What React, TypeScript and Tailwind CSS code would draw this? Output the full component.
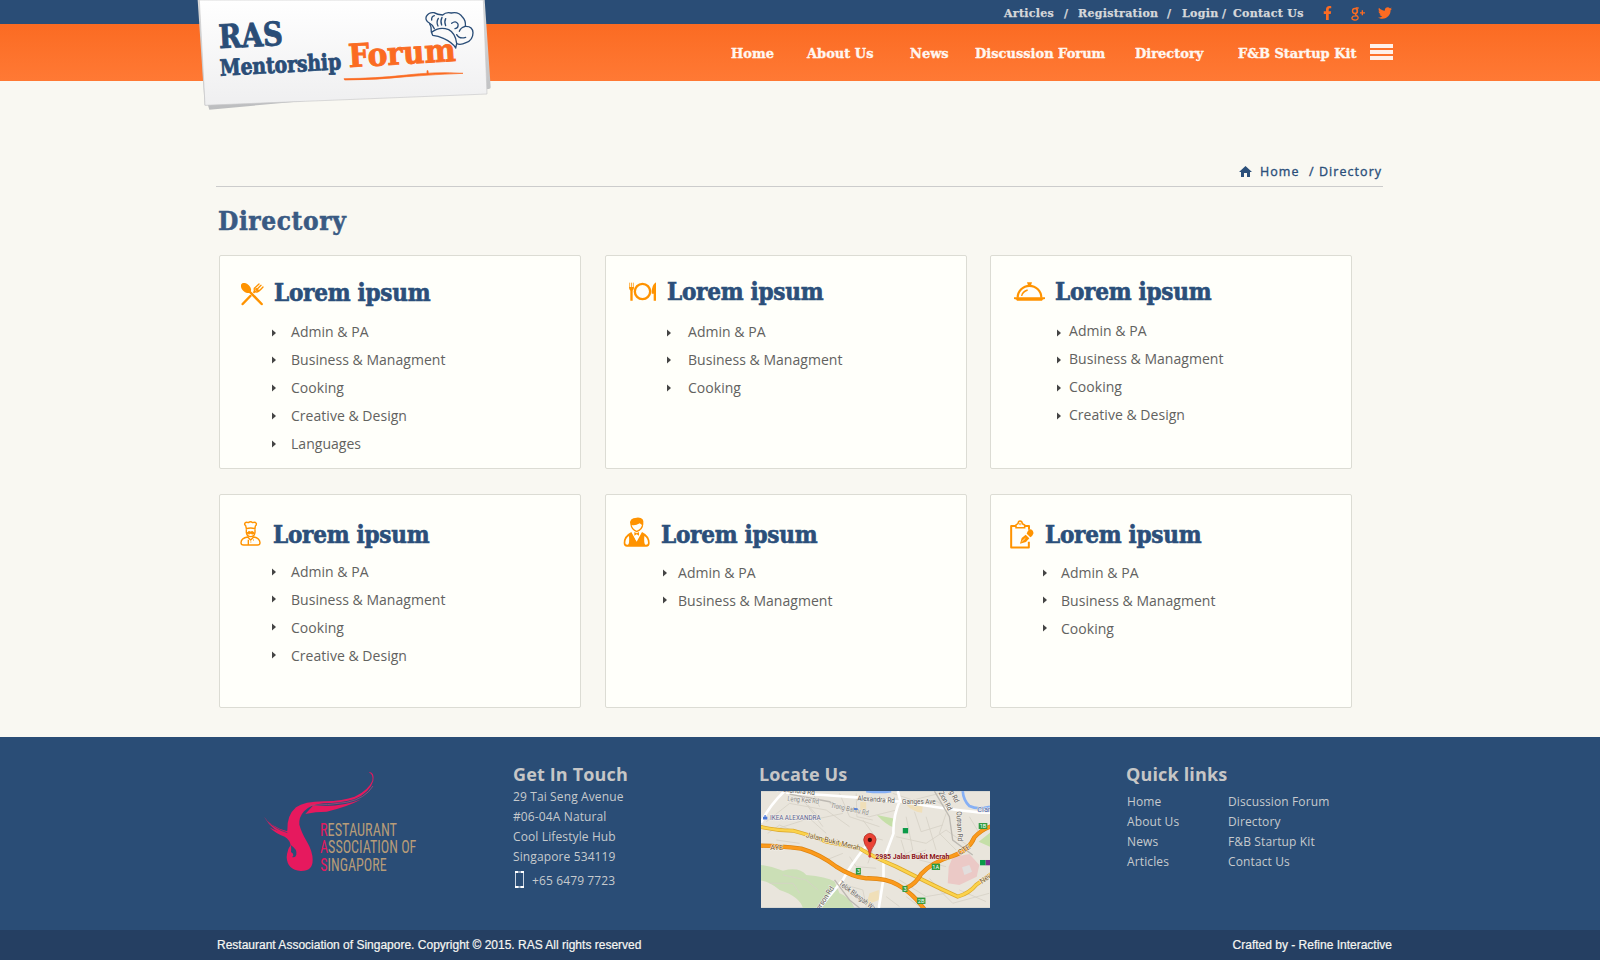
import type { ReactNode } from "react";
import { FaFacebookF, FaTwitter } from "react-icons/fa";

const SLAB = "font-['DejaVu_Serif_Condensed','DejaVu_Serif',serif] font-bold";
const SLAB_WIDE = "font-['DejaVu_Serif',serif] font-bold";

function BrandLogo() {
  return (
    <svg width="310" height="120" viewBox="0 0 930 360" className="absolute left-[190px] top-0" role="img" aria-label="RAS Mentorship Forum">
      <defs>
        <linearGradient id="paper" x1="0" y1="0" x2="0" y2="1">
          <stop offset="0" stopColor="#ffffff" />
          <stop offset="1" stopColor="#efeff0" />
        </linearGradient>
        <linearGradient id="back" x1="0" y1="0" x2="0" y2="1">
          <stop offset="0" stopColor="#dcdcdc" />
          <stop offset="1" stopColor="#bcbdbf" />
        </linearGradient>
      </defs>
      <path d="M23 0 L884 0 L902 262 Q902 267 896 267 L420 296 L58 329 L54 316 L44 316 Z" fill="url(#back)" />
      <path d="M28 0 L880 0 L891 282 L45 316 Z" fill="url(#paper)" stroke="#c8c8ca" strokeWidth="2" />
      <g className="font-['DejaVu_Serif_Condensed','DejaVu_Serif',serif] font-bold" fill="#2a4d77" stroke="#2a4d77" strokeWidth="2.5">
        <text x="0" y="0" fontSize="98" textLength="192" lengthAdjust="spacingAndGlyphs" transform="translate(88 145) rotate(-3)">RAS</text>
        <text x="0" y="0" fontSize="67" textLength="364" lengthAdjust="spacingAndGlyphs" transform="translate(91 227) rotate(-3)">Mentorship</text>
        <text x="0" y="0" fontSize="96" textLength="322" lengthAdjust="spacingAndGlyphs" fill="#fb6b22" stroke="#fb6b22" transform="translate(477 202) rotate(-3.4)">Forum</text>
      </g>
      <path d="M462 236 Q560 235 640 226 Q740 214 819 220 Q740 223 650 230 Q560 240 464 240 Z M711 212 L714 212 L715 222 H711 Z" fill="#fb6b22" stroke="#fb6b22" strokeWidth="2" />
      <g fill="none" stroke="#2a4d77" strokeWidth="4" strokeLinecap="round" strokeLinejoin="round">
        <path d="M724 96 Q726 82 718 69 Q704 62 709 49 Q717 36 732 38 Q742 44 758 45 Q768 35 784 39 Q806 34 818 52 Q828 62 826 79 Q848 78 849 98 Q849 120 828 128 Q812 136 800 131 L797 144 Q788 128 762 116 Q744 107 728 106 Z" fill="#fafafa" />
        <path d="M725 97 Q748 78 776 89 Q796 99 800 130 M745 55 Q738 66 744 78 M756 52 Q750 64 755 75 M767 56 Q762 66 767 77 M785 70 Q797 60 804 72 Q806 84 795 86 M826 79 Q812 82 808 94 M800 104 Q808 118 827 112 M719 70 Q728 74 733 86 M733 47 Q724 50 725 60" />
      </g>
    </svg>
  );
}

function GooglePlus() {
  return (
    <svg width="14" height="14" viewBox="0 0 42 42" fill="none" stroke="#fb6b22" strokeWidth="4">
      <circle cx="12" cy="12" r="7.5" />
      <path d="M14 3 H23 M17 7 Q22 14 15 20 Q12 23 17 26 Q24 31 20 36 Q16 40 10 39 Q2 38 3 32 Q5 26 16 27 M34 10 V25 M27 17.5 H42" />
    </svg>
  );
}

const top = [
  { label: "Articles", w: "w-[60px]" },
  { label: "/", w: "w-[14px]" },
  { label: "Registration", w: "w-[89px]" },
  { label: "/", w: "w-[15px]" },
  { label: "Login", w: "w-[40px]" },
  { label: "/", w: "w-[11px]" },
  { label: "Contact Us", w: "w-[90px]" },
];

const nav = [
  { label: "Home", w: "w-[76px]" },
  { label: "About Us", w: "w-[103px]" },
  { label: "News", w: "w-[65px]" },
  { label: "Discussion Forum", w: "w-[160px]" },
  { label: "Directory", w: "w-[103px]" },
  { label: "F&B Startup Kit", w: "w-[132px]" },
];

function Header() {
  return (
    <header className="relative">
      <div className="flex h-6 bg-[#2a4d76] pl-[1004px] pt-[6px]">
        {top.map((t, i) => (
          <span key={i} className={`${SLAB_WIDE} ${t.w} shrink-0 whitespace-nowrap text-[11px] leading-[15px] tracking-[0.3px] text-[#d6d8da] [-webkit-text-stroke:0.25px_#d6d8da]`}>
            {t.label}
          </span>
        ))}
        <FaFacebookF className="h-[14px] w-[9px] text-[#fb6b22]" />
        <span className="ml-[19px] mt-px"><GooglePlus /></span>
        <FaTwitter className="ml-3 h-[14px] w-4 text-[#fb6b22]" />
      </div>
      <div className="flex h-[57px] bg-linear-to-b from-[#fb6b22] to-[#ff7934] pl-[731px] pt-5">
        {nav.map((t) => (
          <a key={t.label} className={`${SLAB_WIDE} ${t.w} shrink-0 whitespace-nowrap text-[13px] leading-[19px] text-[#fff6f0] [-webkit-text-stroke:0.35px_#fff6f0]`}>
            {t.label}
          </a>
        ))}
        <div className="flex w-[23px] flex-col gap-[2px]">
          <i className="h-1 bg-[#fff1ea]" />
          <i className="h-1 bg-[#fff1ea]" />
          <i className="h-1 bg-[#fff1ea]" />
        </div>
      </div>
      <BrandLogo />
    </header>
  );
}

const O = "#ff9300";

const CutleryIcon = (
  <svg width="23" height="23" viewBox="122 398 69 69">
    <ellipse cx="137" cy="413" rx="18" ry="12" transform="rotate(45 137 413)" fill={O} />
    <path d="M143 419 L184 461" stroke={O} strokeWidth="7.5" strokeLinecap="round" />
    <path d="M150 437 L127 461" stroke={O} strokeWidth="7.5" strokeLinecap="round" />
    <path d="M159 427 L166 421" stroke={O} strokeWidth="6" />
    <path d="M162 414 Q160 424 168 425 Q174 426 188 410 M162 414 L176 401 M168 419 L182 405" stroke={O} strokeWidth="4" fill="none" strokeLinecap="round" />
    <path d="M163 416 L172 425 L177 420 L168 412 Z" fill={O} />
  </svg>
);

const PlateIcon = (
  <svg width="27" height="19" viewBox="117 125 81 57">
    <path d="M119 127 V143 M124.5 127 V143 M130 127 V143" stroke={O} strokeWidth="3" opacity=".75" />
    <path d="M117 140 H132 Q132 149 128 151 V181 H121 V151 Q117 149 117 140 Z" fill={O} />
    <circle cx="157.5" cy="153.5" r="23" fill="none" stroke={O} strokeWidth="7" />
    <path d="M198 126 V181 H191 V160 H185 Q184 134 198 126 Z" fill={O} />
  </svg>
);

const ClocheIcon = (
  <svg width="31" height="19" viewBox="102 395 93 57">
    <path d="M113 442 A35.5 35.5 0 0 1 184 442" fill="none" stroke={O} strokeWidth="6.5" />
    <path d="M102 441 H195 V446 Q187 446 186 451 H111 Q110 446 102 446 Z" fill={O} />
    <path d="M141 396 H156 L153 405 H144 Z" fill={O} />
    <path d="M125 437 Q127 424 143 419" fill="none" stroke={O} strokeWidth="4" />
  </svg>
);

const ChefIcon = (
  <svg width="21" height="25" viewBox="121 121 63 75" fill="none" stroke={O} strokeWidth="4.2" strokeLinejoin="round">
    <path d="M140 144 L138 135 Q133 132 136 127 Q140 123 146 126 Q153 121 159 126 Q166 123 170 128 Q171 133 167 136 L166 144 Q153 140 140 144 Z" />
    <path d="M140 146 V156 Q142 168 153 168 Q164 168 166 156 V146" />
    <path d="M142 157 Q147 150 153 154 Q159 150 164 157 Q158 163 153 158 Q148 163 142 157 Z" fill={O} strokeWidth="3" />
    <path d="M144 169 Q124 172 124 186 Q124 193 132 193 H174 Q181 193 181 186 Q180 172 162 169 L153 178 Z M146 177 V193" />
    <path d="M160 178 H163 M152 184 H155" strokeWidth="4" opacity=".7" />
  </svg>
);

const WaiterIcon = (
  <svg width="27" height="30" viewBox="97 112 81 90">
    <path d="M119 134 Q115 114 138 114 Q162 112 158 134 Q157 152 138 158 Q121 152 119 134 Z" fill={O} />
    <path d="M123 136 Q134 139 147 131 L154 136 Q151 148 138 153 Q126 149 123 136 Z" fill="#fffffa" />
    <path d="M122 157 L138 186 L154 157 Q177 168 177 190 Q177 201 167 201 H109 Q99 201 99 190 Q99 168 122 157 Z" fill={O} />
    <path d="M126 159 L137 184 L150 159 Z" fill="#fffffa" />
    <path d="M131 157 L138 161 L145 157 V168 L138 164 L131 168 Z" fill={O} />
    <path d="M115 169 Q104 176 104 190 Q104 196 112 195 Q117 192 115 169 Z M161 169 Q172 176 172 190 Q172 196 164 195 Q159 192 161 169 Z" fill="#fffffa" />
  </svg>
);

const ClipboardIcon = (
  <svg width="24" height="29" viewBox="89 119 72 87" fill="none" stroke={O}>
    <path d="M146 148 V137 H92.500 V201.500 H145.500 V184" strokeWidth="6" strokeLinejoin="round" />
    <path d="M107 142 V134 L113 130 Q114 122 119 122 Q125 122 126 130 L133 134 V142 Z" strokeWidth="4.500" fill="#fffffa" />
    <circle cx="119.500" cy="131" r="2.500" strokeWidth="2" />
    <path d="M119 190 L124 173 L136 163 L147 174 L137 185 Z" fill={O} stroke="none" />
    <path d="M124 184 L135 174" stroke="#fffffa" strokeWidth="2" />
    <path d="M139 160 Q143 147 152 147 Q161 152 159 160 Q156 168 150 171 Z" fill={O} stroke="none" />
  </svg>
);

type Card = {
  icon: ReactNode;
  pad: string;
  iconBox: string;
  list: string;
  marker: string;
  firstTop: string;
  restTop: string;
  items: string[];
};

const A = "Admin & PA";
const B = "Business & Managment";
const C = "Cooking";
const D = "Creative & Design";

const cards: Card[] = [
  { icon: CutleryIcon, pad: "pt-[22px]", iconBox: "w-[54px] pl-[21px] pt-[5px]", list: "mt-[10px] pl-[52px]", marker: "w-[19px]", firstTop: "pt-[11px]", restTop: "pt-[10px]", items: [A, B, C, D, "Languages"] },
  { icon: PlateIcon, pad: "pt-[21px]", iconBox: "w-[61px] pl-[23px] pt-[5px]", list: "mt-[11px] pl-[61px]", marker: "w-[21px]", firstTop: "pt-[11px]", restTop: "pt-[10px]", items: [A, B, C] },
  { icon: ClocheIcon, pad: "pt-[21px]", iconBox: "w-[64px] pl-[23px] pt-[5px]", list: "mt-[10px] pl-[66px]", marker: "w-[12px]", firstTop: "pt-[12px]", restTop: "pt-[11px]", items: [A, B, C, D] },
  { icon: ChefIcon, pad: "pt-[25px]", iconBox: "w-[53px] pl-[20px] pt-px", list: "mt-[8px] pl-[52px]", marker: "w-[19px]", firstTop: "pt-[10px]", restTop: "pt-[9px]", items: [A, B, C, D] },
  { icon: WaiterIcon, pad: "pt-[25px]", iconBox: "w-[55px] pl-[17px] -mt-[3px]", list: "mt-[9px] pl-[57px]", marker: "w-[15px]", firstTop: "pt-[10px]", restTop: "pt-[9px]", items: [A, B] },
  { icon: ClipboardIcon, pad: "pt-[25px]", iconBox: "w-[54px] pl-[19px]", list: "mt-[9px] pl-[52px]", marker: "w-[18px]", firstTop: "pt-[10px]", restTop: "pt-[9px]", items: [A, B, C] },
];

function DirectoryCard({ card }: { card: Card }) {
  return (
    <section className={`h-[214px] w-[362px] rounded-[2px] border border-[#dcdcd4] bg-[#fffffa] ${card.pad}`}>
      <div className="flex h-[30px]">
        <span className={`shrink-0 ${card.iconBox}`}>{card.icon}</span>
        <h2 className={`${SLAB} whitespace-nowrap text-[24px] leading-[30px] tracking-[-0.25px] text-[#2b4f7a] [-webkit-text-stroke:0.6px_#2b4f7a]`}>Lorem ipsum</h2>
      </div>
      <ul className={card.list}>
        {card.items.map((t, i) => (
          <li key={t} className="flex h-7 text-[14px] leading-7 tracking-[0.03px] text-[#62625f]">
            <span className={`${card.marker} ${i === 0 ? card.firstTop : card.restTop}`}>
              <svg width="4" height="8" viewBox="0 0 4 8" className="block"><path d="M0 0.500 L4 4 L0 7.500 Z" fill="#444" /></svg>
            </span>
            {t}
          </li>
        ))}
      </ul>
    </section>
  );
}

function RasLogo() {
  return (
    <svg width="160" height="104" viewBox="186 120 480 312" role="img" aria-label="Restaurant Association of Singapore">
      <g fill="#e6195e">
        <path d="M508 126 Q524 128 520 152 Q510 188 462 208 Q420 220 370 220 Q330 224 312 244 Q296 262 298 284 Q304 306 320 334 Q338 364 338 390 Q338 424 302 423 Q262 420 260 382 Q262 358 272 346 Q270 330 254 320 Q228 312 208 292 Q238 310 262 302 Q260 256 288 232 Q312 214 372 214 Q430 212 464 200 Q506 180 517 152 Q520 132 508 128 Z" />
        <path d="M484 208 Q440 232 380 245 Q346 245 316 252 L340 226 Q420 234 484 208 Z" />
        <path d="M192 260 Q212 290 262 304 L268 318 Q218 306 192 260 Z" />
      </g>
      <path d="M519 168 Q496 206 440 217 Q380 226 330 226" fill="none" stroke="#a04a78" strokeWidth="2.500" />
      <path d="M200 270 Q222 296 262 308" fill="none" stroke="#2a4d76" strokeWidth="2" />
      <path d="M273 346 Q292 358 289 374 Q286 384 276 381 Q282 378 279 371 L273 366 Q274 356 273 346 Z" fill="#2a4d76" />
      <g className="font-['Roboto_Condensed','Open_Sans',sans-serif]" fontSize="57" fill="#b79c78">
        <text x="360" y="317" textLength="231" lengthAdjust="spacingAndGlyphs"><tspan fill="#e6195e">R</tspan>ESTAURANT</text>
        <text x="360" y="369" textLength="289" lengthAdjust="spacingAndGlyphs"><tspan fill="#e6195e">A</tspan>SSOCIATION OF</text>
        <text x="361" y="422" textLength="199" lengthAdjust="spacingAndGlyphs"><tspan fill="#e6195e">S</tspan>INGAPORE</text>
      </g>
    </svg>
  );
}

function LocationMap() {
  return (
    <svg width="229" height="117" viewBox="64 123 688 351" className="font-[Roboto,sans-serif]">
      <rect x="64" y="123" width="688" height="351" fill="#e9e5dc" />
      <path d="M64 345 Q100 350 130 362 Q180 350 200 375 Q260 380 285 395 L300 430 Q330 440 345 474 H190 Q180 440 120 420 Q90 395 64 392 Z" fill="#cbdfb6" />
      <path d="M412 195 L462 205 V232 Q440 225 412 195 Z M718 275 L752 248 V290 Z" fill="#c5dfa8" />
      <path d="M500 163 L550 165 L548 188 Q520 185 500 163 Z M390 430 L418 420 V450 L380 465 Z M362 155 H380 V180 H362 Z" fill="#f0dfb8" />
      <path d="M640 322 L690 312 L720 345 L712 380 L660 405 L625 400 L628 350 Z" fill="#ebc9c6" />
      <path d="M668 352 L690 345 L698 365 L675 375 Z" fill="#e2dedd" />
      <g fill="none" stroke="#d6d1c7" strokeWidth="2.500">
        <path d="M80 215 L150 160 L260 180 L330 230 M180 135 L250 230 M100 240 L210 205 L260 250 M270 160 L390 200 L470 180 M300 130 L330 200 L420 230 M210 300 L260 330 L310 310 M330 320 L350 350 L410 355 M470 260 L560 280 L620 240 L690 290 M500 200 L520 300 L470 330 M560 200 L590 300 M620 190 L600 250 L650 300 M480 390 L560 440 L620 430 M580 400 L640 460 L750 430 M540 470 L500 440 M90 400 L160 400 L180 430 M300 400 L370 420 L380 470 M690 200 L720 250 M460 130 L520 150 L600 130 M110 270 L180 280 M220 130 L240 170 M400 250 L370 210 M540 330 L620 350 M400 300 L385 340 M660 420 L740 455" />
        <path d="M84 250 L120 225 L165 245 M205 165 L240 205 L310 190 M430 270 L390 260 M485 270 L500 320 L560 300 M525 185 L545 245 L610 225 M585 150 L640 180 M130 375 L200 390 L235 420 M440 440 L480 470 M570 385 L600 420 M350 130 L352 200 L400 210" />
      </g>
      <path d="M670 123 Q672 150 690 168 Q715 180 752 170 M380 123 Q420 128 455 123" fill="none" stroke="#86b0f5" strokeWidth="8" />
      <g fill="none" stroke="#ffffff" strokeWidth="8">
        <path d="M64 218 Q90 165 135 123 M140 128 Q260 135 350 142 Q430 152 490 155 Q600 175 720 187 L752 188 M475 123 L482 150 Q460 200 462 250 L432 330 V385 L418 474 M378 290 Q330 350 310 390 L240 474" />
        <path d="M150 132 L270 155 L310 180 M585 123 L630 200 L640 270 Q680 300 700 315" stroke="#bdb9b2" strokeWidth="4" />
        <path d="M285 390 L330 450 L360 474" stroke="#bdb9b2" strokeWidth="4" />
      </g>
      <g fill="none" strokeLinecap="square">
        <path d="M64 231 Q110 242 160 242 Q220 258 260 275 L360 295 Q400 320 470 350 L560 395 Q610 420 655 440 Q690 430 710 405 L752 375" stroke="#dca92c" strokeWidth="12" />
        <path d="M64 231 Q110 242 160 242 Q220 258 260 275 L360 295 Q400 320 470 350 L560 395 Q610 420 655 440 Q690 430 710 405 L752 375" stroke="#fbd24a" strokeWidth="8" />
        <path d="M64 287 Q120 288 185 296 Q240 312 290 350 Q340 382 380 385 Q440 384 475 405 Q520 430 555 478 M505 412 Q530 400 545 372 Q580 335 640 318 Q690 300 705 262 Q725 240 752 230" stroke="#dd8410" strokeWidth="13" />
        <path d="M64 287 Q120 288 185 296 Q240 312 290 350 Q340 382 380 385 Q440 384 475 405 Q520 430 555 478 M505 412 Q530 400 545 372 Q580 335 640 318 Q690 300 705 262 Q725 240 752 230" stroke="#fb9a1c" strokeWidth="9" />
      </g>
      <g fill="#2d9a3d">
        <rect x="490" y="234" width="16" height="16" fill="#0b9a48" />
        <rect x="722" y="330" width="17" height="16" fill="#0b9a48" />
        <rect x="739" y="330" width="13" height="16" fill="#76308c" />
        <rect x="718" y="219" width="26" height="18" />
        <rect x="349" y="354" width="15" height="20" />
        <rect x="577" y="341" width="25" height="19" />
        <rect x="489" y="408" width="15" height="18" />
        <rect x="533" y="443" width="25" height="19" />
      </g>
      <g fill="#ffffff" fontSize="17" textAnchor="middle">
        <text x="731" y="234">1B</text><text x="357" y="370">3</text><text x="589" y="357">1A</text><text x="497" y="423">3</text><text x="545" y="459">2B</text>
      </g>
      <g fontSize="22" fill="#5f5c58" stroke="#f5f2ec" strokeWidth="3" paintOrder="stroke" strokeLinejoin="round">
        <text x="112" y="123" transform="rotate(6 112 123)" textLength="114" lengthAdjust="spacingAndGlyphs">Alexandra Rd</text>
        <text x="143" y="153" transform="rotate(5 143 153)" fill="#85827d" textLength="95" lengthAdjust="spacingAndGlyphs">Leng Kee Rd</text>
        <text x="273" y="172" transform="rotate(12 273 172)" fill="#85827d" textLength="115" lengthAdjust="spacingAndGlyphs">Tiong Bahru Rd</text>
        <text x="353" y="151" transform="rotate(4 353 151)" textLength="113" lengthAdjust="spacingAndGlyphs">Alexandra Rd</text>
        <text x="488" y="162" textLength="101" lengthAdjust="spacingAndGlyphs">Ganges Ave</text>
        <text x="597" y="128" transform="rotate(62 597 128)" textLength="62" lengthAdjust="spacingAndGlyphs">Zion Rd</text>
        <text x="622" y="112" transform="rotate(62 622 112)" textLength="54" lengthAdjust="spacingAndGlyphs">ing Rd</text>
        <text x="651" y="184" transform="rotate(87 651 184)" textLength="90" lengthAdjust="spacingAndGlyphs">Outram Rd</text>
        <text x="297" y="404" transform="rotate(37 297 404)" textLength="138" lengthAdjust="spacingAndGlyphs">Telok Blangah Way</text>
        <text x="234" y="492" transform="rotate(-57 234 492)" textLength="92" lengthAdjust="spacingAndGlyphs">derson Rd</text>
        <text x="198" y="261" transform="rotate(14 198 261)" fill="#7a5a22" textLength="168" lengthAdjust="spacingAndGlyphs">Jalan Bukit Merah</text>
        <text x="92" y="299" fill="#7a4c10" textLength="38" lengthAdjust="spacingAndGlyphs">AYE</text>
        <text x="662" y="316" transform="rotate(-33 662 316)" fill="#7a4c10">CTE</text>
        <text x="727" y="402" transform="rotate(-33 727 402)" fill="#7a5a22">New</text>
        <text x="714" y="187" fill="#4a62a8">Clarke</text>
        <text x="91" y="209" fill="#5a6290" textLength="152" lengthAdjust="spacingAndGlyphs">IKEA ALEXANDRA</text>
      </g>
      <path d="M70 208 V200 H83 V208 Z M73 199 Q76 191 80 199 M344 174 h5 v6 h-5 z M350 174 h4 v6 h-4 z" fill="#4a78d8" />
      <path d="M391 319 Q389 299 376 283 Q369 268 376 258 Q391 242 406 258 Q414 268 406 283 Q393 299 391 319 Z" fill="#ea4335" stroke="#a3221b" strokeWidth="2" />
      <circle cx="391" cy="270" r="6.500" fill="#3d0e0b" />
      <circle cx="391" cy="319" r="4" fill="#d6392e" />
      <text x="407" y="327" fontSize="24" fontWeight="700" fill="#8a1218" stroke="#f8f0e6" strokeWidth="2" paintOrder="stroke" textLength="223" lengthAdjust="spacingAndGlyphs">2985 Jalan Bukit Merah</text>
    </svg>
  );
}

const footHead = "whitespace-nowrap text-[18px] font-bold leading-6 tracking-[0.15px] text-[#c6c6c6]";
const footText = "text-[12px] leading-5 tracking-[0.12px] text-[#c6cacd] whitespace-nowrap";

function Footer() {
  return (
    <footer>
      <div className="flex h-[193px] bg-[#2a4d76]">
        <div className="w-[513px] shrink-0 pl-[262px] pt-[33px]"><RasLogo /></div>
        <div className="w-[246px] shrink-0 pt-[25px]">
          <h3 className={footHead}>Get In Touch</h3>
          <p className={`mt-px ${footText}`}>29 Tai Seng Avenue</p>
          <p className={footText}>#06-04A Natural</p>
          <p className={footText}>Cool Lifestyle Hub</p>
          <p className={footText}>Singapore 534119</p>
          <p className={`mt-1 flex ${footText}`}>
            <svg width="9" height="17" viewBox="0 0 9 17" className="ml-[2px] mr-[8px]">
              <path d="M0.500 1 H8.500 V16 H0.500 Z" fill="none" stroke="#c9d4e2" />
              <path d="M0 0 H9 V2 H0 Z M0 15 H9 V17 H0 Z" fill="#fff" />
              <path d="M3 1 H6 M3.500 16 H5.500" stroke="#2a4d76" />
            </svg>
            +65 6479 7723
          </p>
        </div>
        <div className="w-[367px] shrink-0 pt-[25px]">
          <h3 className={footHead}>Locate Us</h3>
          <div className="ml-[2px] mt-[5px]"><LocationMap /></div>
        </div>
        <div className="pt-[25px]">
          <h3 className={footHead}>Quick links</h3>
          <div className="mt-[6px] flex">
            <ul className="w-[102px] pl-px">
              {["Home", "About Us", "News", "Articles"].map((t) => <li key={t} className={footText}>{t}</li>)}
            </ul>
            <ul>
              {["Discussion Forum", "Directory", "F&B Startup Kit", "Contact Us"].map((t) => <li key={t} className={footText}>{t}</li>)}
            </ul>
          </div>
        </div>
      </div>
      <div className="flex h-[30px] items-center justify-between bg-[#253f62] pl-[217px] pr-[208px] font-['Liberation_Sans',Arial,sans-serif] text-[12px] leading-[30px] text-[#f6f6f2] [-webkit-text-stroke:0.2px_#f6f6f2]">
        <span>Restaurant Association of Singapore. Copyright © 2015. RAS All rights reserved</span>
        <span>Crafted by - Refine Interactive</span>
      </div>
    </footer>
  );
}

export default function App() {
  return (
    <div className="flex h-[960px] w-[1600px] flex-col overflow-hidden bg-[#f9f8f2] font-['Open_Sans',sans-serif]">
      <Header />
      <main className="h-[656px]">
        <div className="ml-[216px] flex h-[106px] w-[1167px] justify-end border-b border-[#cccccc] pt-[81px] text-[12.500px] font-medium leading-5 tracking-[1.05px] text-[#2b4f7a] [-webkit-text-stroke:0.35px_#2b4f7a]">
          <svg width="13" height="11" viewBox="0 0 13 11" className="mt-1"><path d="M6.500 0 L13 6 H11 V11 H8 V7 H5 V11 H2 V6 H0 Z" fill="#2b4f7a" /></svg>
          <span className="ml-2 w-[49px]">Home</span>
          <span className="w-[10px]">/</span>
          <span className="w-[64px] whitespace-nowrap">Directory</span>
        </div>
        <h1 className={`${SLAB} ml-[218px] mt-[18px] h-[50px] text-[26px] leading-8 tracking-[0.6px] text-[#3a5a83] [-webkit-text-stroke:0.5px_#3a5a83]`}>Directory</h1>
        <div className="ml-[219px] grid w-[1133px] grid-cols-[386px_385px_362px] gap-y-[25px]">
          {cards.map((c, i) => <DirectoryCard key={i} card={c} />)}
        </div>
      </main>
      <Footer />
    </div>
  );
}
